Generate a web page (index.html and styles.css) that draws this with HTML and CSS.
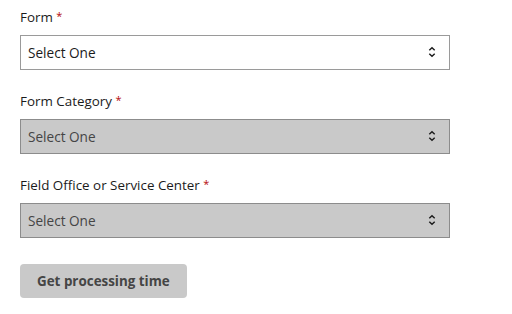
FILE: index.html
```html
<!DOCTYPE html>
<html lang="en">
<head>
    <meta charset="UTF-8">
    <meta name="viewport" content="width=device-width, initial-scale=1.0">
    <title>Check Case Processing Times</title>
    <link rel="stylesheet" href="styles.css">
</head>
<body>

<form class="times-form">
    <!-- Form -->
    <div class="form-group">
        <label for="form" class="form-label">Form <span class="required">*</span></label>
        <div class="select-wrap">
            <select id="form" name="form" class="form-select">
                <option>Select One</option>
            </select>
            <svg class="select-arrows" width="8" height="12" viewBox="0 0 8 12" aria-hidden="true">
                <path d="M1.3 4.3 L4 1.7 L6.7 4.3" fill="none" stroke="#1b1b1b" stroke-width="1.4"/>
                <path d="M1.3 7.7 L4 10.3 L6.7 7.7" fill="none" stroke="#1b1b1b" stroke-width="1.4"/>
            </svg>
        </div>
    </div>

    <!-- Form category -->
    <div class="form-group">
        <label for="category" class="form-label">Form Category <span class="required">*</span></label>
        <div class="select-wrap">
            <select id="category" name="category" class="form-select" disabled>
                <option>Select One</option>
            </select>
            <svg class="select-arrows" width="8" height="12" viewBox="0 0 8 12" aria-hidden="true">
                <path d="M1.3 4.3 L4 1.7 L6.7 4.3" fill="none" stroke="#1b1b1b" stroke-width="1.4"/>
                <path d="M1.3 7.7 L4 10.3 L6.7 7.7" fill="none" stroke="#1b1b1b" stroke-width="1.4"/>
            </svg>
        </div>
    </div>

    <!-- Office -->
    <div class="form-group">
        <label for="office" class="form-label">Field Office or Service Center <span class="required">*</span></label>
        <div class="select-wrap">
            <select id="office" name="office" class="form-select" disabled>
                <option>Select One</option>
            </select>
            <svg class="select-arrows" width="8" height="12" viewBox="0 0 8 12" aria-hidden="true">
                <path d="M1.3 4.3 L4 1.7 L6.7 4.3" fill="none" stroke="#1b1b1b" stroke-width="1.4"/>
                <path d="M1.3 7.7 L4 10.3 L6.7 7.7" fill="none" stroke="#1b1b1b" stroke-width="1.4"/>
            </svg>
        </div>
    </div>

    <button type="submit" class="submit-btn" disabled>Get processing time</button>
</form>

</body>
</html>
```

FILE: styles.css
```css
/* Colors */
:root {
    --ink: #1b1b1b;
    --required: #b50909;
    --border: #9a9a9a;
    --border-disabled: #8c8c8c;
    --disabled: #c9c9c9;
    --disabled-ink: #454545;
    --white: #ffffff;
}

body {
    margin: 0;
    padding: 7px 20px 0 20px;
    font-family: "Open Sans", sans-serif;
    color: var(--ink);
    background-color: var(--white);
}

.times-form {
    width: 430px;
}

.form-group {
    margin-bottom: 21px;
}

.form-label {
    display: block;
    height: 20px;
    font-size: 13.4px;
    line-height: 20px;
    margin-bottom: 8px;
}

.required {
    color: var(--required);
    font-size: 11px;
    line-height: 0;
    vertical-align: 2px;
}

.select-wrap {
    position: relative;
}

.form-select {
    appearance: none;
    -webkit-appearance: none;
    display: block;
    width: 100%;
    height: 35px;
    margin: 0;
    padding: 0 30px 0 7px;
    font-family: inherit;
    font-size: 13.6px;
    color: var(--ink);
    background-color: var(--white);
    border: 1px solid var(--border);
    border-radius: 0;
    box-sizing: border-box;
}

.form-select:disabled {
    background-color: var(--disabled);
    border-color: var(--border-disabled);
    color: var(--disabled-ink);
    opacity: 1;
}

.select-arrows {
    position: absolute;
    right: 14px;
    top: 11px;
    pointer-events: none;
}

.submit-btn {
    margin-top: 5px;
    height: 34px;
    padding: 0 17px;
    font-family: inherit;
    font-size: 13.4px;
    font-weight: bold;
    color: var(--disabled-ink);
    background-color: var(--disabled);
    border: none;
    border-radius: 4px;
}
```
